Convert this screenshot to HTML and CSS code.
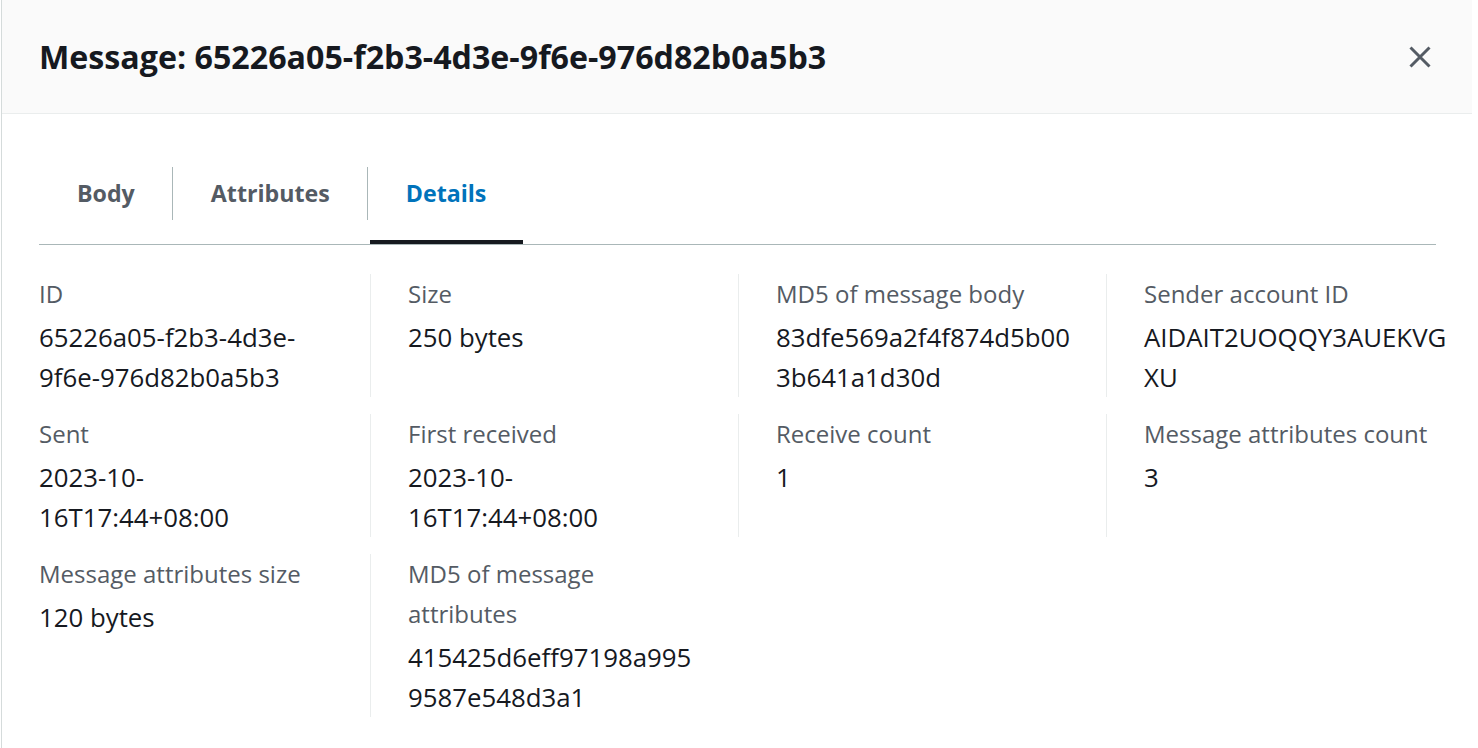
FILE: index.html
```html
<!DOCTYPE html>
<html lang="en">
<head>
<meta charset="utf-8">
<title>Message details</title>
<link rel="stylesheet" href="styles.css">
</head>
<body>
<div class="modal">
  <header class="modal-header">
    <h1 class="modal-title">Message: 65226a05-f2b3-4d3e-9f6e-976d82b0a5b3</h1>
    <button class="close" aria-label="Close">
      <svg viewBox="0 0 24 24" width="24" height="24"><path d="M2.5 2.5 L21.5 21.5 M21.5 2.5 L2.5 21.5" stroke="#545b64" stroke-width="3" fill="none"/></svg>
    </button>
  </header>
  <div class="modal-body">
    <div class="tabs">
      <div class="tab">Body</div>
      <div class="tab-sep"></div>
      <div class="tab">Attributes</div>
      <div class="tab-sep"></div>
      <div class="tab active">Details</div>
    </div>
    <div class="details">
      <div class="cell">
        <div class="label">ID</div>
        <div class="value">65226a05-f2b3-4d3e-<br>9f6e-976d82b0a5b3</div>
      </div>
      <div class="cell div">
        <div class="label">Size</div>
        <div class="value">250 bytes</div>
      </div>
      <div class="cell div">
        <div class="label">MD5 of message body</div>
        <div class="value">83dfe569a2f4f874d5b00<br>3b641a1d30d</div>
      </div>
      <div class="cell div">
        <div class="label">Sender account ID</div>
        <div class="value">AIDAIT2UOQQY3AUEKVG<br>XU</div>
      </div>

      <div class="cell">
        <div class="label">Sent</div>
        <div class="value">2023-10-<br>16T17:44+08:00</div>
      </div>
      <div class="cell div">
        <div class="label">First received</div>
        <div class="value">2023-10-<br>16T17:44+08:00</div>
      </div>
      <div class="cell div">
        <div class="label">Receive count</div>
        <div class="value">1</div>
      </div>
      <div class="cell div">
        <div class="label">Message attributes count</div>
        <div class="value">3</div>
      </div>

      <div class="cell">
        <div class="label">Message attributes size</div>
        <div class="value">120 bytes</div>
      </div>
      <div class="cell div">
        <div class="label">MD5 of message<br>attributes</div>
        <div class="value">415425d6eff97198a995<br>9587e548d3a1</div>
      </div>
    </div>
  </div>
</div>
</body>
</html>
```

FILE: styles.css
```css
* { box-sizing: border-box; }
html, body { margin: 0; padding: 0; background: #ffffff; }
body {
  font-family: "Open Sans", "Noto Sans", sans-serif;
  color: #16191f;
}
.modal {
  margin-left: 1px;
  width: 1471px;
  min-height: 748px;
  border-left: 1px solid #d5dbdb;
  background: #ffffff;
}
.modal-header {
  height: 114px;
  background: #fafafa;
  border-bottom: 1px solid #eaeded;
  display: flex;
  align-items: center;
  justify-content: space-between;
  padding: 0 40px 0 37px;
}
.modal-title {
  margin: 0;
  font-size: 32.2px;
  font-weight: 700;
  line-height: 40px;
  color: #16191f;
}
.close {
  border: 0;
  background: transparent;
  padding: 0;
  width: 24px;
  height: 24px;
  display: flex;
  align-items: center;
  justify-content: center;
  cursor: pointer;
}
.modal-body {
  padding: 32px 36px 0 37px;
}
.tabs {
  display: flex;
  align-items: stretch;
  border-bottom: 1px solid #aab7b8;
}
.tab {
  height: 98px;
  padding: 0 37px 4px 38px;
  display: flex;
  align-items: center;
  font-size: 23.2px;
  font-weight: 700;
  color: #545b64;
}
.tab.active {
  color: #0073bb;
  box-shadow: inset 0 -4px 0 #16191f;
  margin-left: 2px;
  padding-left: 36px;
}
.tab-sep {
  width: 1px;
  height: 53px;
  align-self: center;
  margin-top: -3px;
  background: #aab7b8;
}
.details {
  margin-top: 29px;
  display: grid;
  grid-template-columns: 331px 368px 368px 1fr;
  row-gap: 17px;
}
.cell {
  padding-right: 20px;
}
.cell.div {
  border-left: 1px solid #eaeded;
  padding-left: 37px;
}
.label {
  font-size: 24px;
  line-height: 40px;
  color: #545b64;
  white-space: nowrap;
}
.value {
  margin-top: 3px;
  font-size: 25.8px;
  line-height: 40px;
  color: #16191f;
  white-space: nowrap;
}
```
